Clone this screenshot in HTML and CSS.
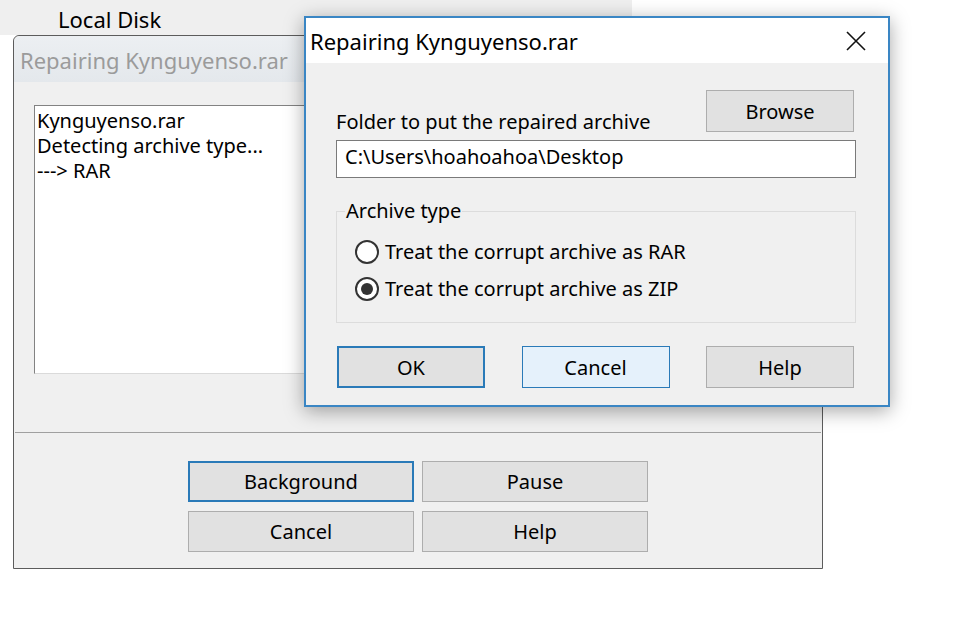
FILE: index.html
```html
<!DOCTYPE html>
<html lang="en">
<head>
    <meta charset="UTF-8">
    <title>Repairing Kynguyenso.rar</title>
    <link rel="stylesheet" href="styles.css">
</head>
<body>
<div class="desktop">

    <!-- Explorer behind -->
    <div class="explorer-strip">Local Disk</div>

    <!-- Progress window (inactive) -->
    <div class="window back-window">
        <div class="titlebar inactive">Repairing Kynguyenso.rar</div>
        <div class="window-body">
            <div class="log-box">
                <p>Kynguyenso.rar</p>
                <p>Detecting archive type...</p>
                <p>---&gt; RAR</p>
            </div>
            <div class="separator"></div>
            <div class="back-buttons">
                <button class="btn focused">Background</button>
                <button class="btn">Pause</button>
                <button class="btn">Cancel</button>
                <button class="btn">Help</button>
            </div>
        </div>
    </div>

    <!-- Repair options dialog (active) -->
    <div class="window front-window">
        <div class="titlebar active">
            <span>Repairing Kynguyenso.rar</span>
            <svg class="close-icon" width="20" height="20" viewBox="0 0 20 20">
                <path d="M1 1 L19 19 M19 1 L1 19" stroke="#111" stroke-width="1.6" fill="none"/>
            </svg>
        </div>
        <div class="window-body front-body">
            <div class="folder-row">
                <span class="folder-label">Folder to put the repaired archive</span>
                <button class="btn btn-small">Browse</button>
            </div>
            <div class="path-input">C:\Users\hoahoahoa\Desktop</div>

            <fieldset class="group-box">
                <legend>Archive type</legend>
                <div class="radio-row">
                    <span class="radio"></span>
                    <span>Treat the corrupt archive as RAR</span>
                </div>
                <div class="radio-row">
                    <span class="radio checked"></span>
                    <span>Treat the corrupt archive as ZIP</span>
                </div>
            </fieldset>

            <div class="dialog-buttons">
                <button class="btn btn-small focused">OK</button>
                <button class="btn btn-small hovered">Cancel</button>
                <button class="btn btn-small">Help</button>
            </div>
        </div>
    </div>

</div>
</body>
</html>
```

FILE: styles.css
```css
/* General */
body {
    margin: 0;
    background: #fff;
    font-family: "Noto Sans", "Open Sans", sans-serif;
    font-size: 20px;
    color: #000;
}

.desktop {
    position: relative;
    width: 972px;
    height: 630px;
    overflow: hidden;
}

/* Explorer strip at the top */
.explorer-strip {
    width: 632px;
    height: 35px;
    background: #efefef;
    padding-left: 58px;
    box-sizing: border-box;
    font-size: 22px;
    line-height: 39px;
}

/* Windows */
.window {
    position: absolute;
    box-sizing: border-box;
    background: #f0f0f0;
}

.titlebar {
    height: 46px;
    box-sizing: border-box;
    font-size: 22px;
    line-height: 48px;
}

.window-body {
    background: #f0f0f0;
}

/* Back progress window */
.back-window {
    left: 13px;
    top: 35px;
    width: 810px;
    height: 534px;
    border: 1px solid #5c5c5c;
    border-radius: 6px 6px 0 0;
}

.titlebar.inactive {
    padding-left: 6px;
    color: #9b9b9b;
    background: linear-gradient(#eceff2, #e4e8ec);
    border-radius: 6px 6px 0 0;
}

.log-box {
    margin: 23px 0 0 20px;
    width: 600px;
    height: 269px;
    box-sizing: border-box;
    background: #fff;
    border-top: 1px solid #828282;
    border-left: 1px solid #828282;
    border-bottom: 1px solid #dadada;
    padding: 2px 0 0 2px;
}

.log-box p {
    margin: 0;
    line-height: 25px;
}

.separator {
    margin: 58px 1px 0 1px;
    border-top: 1px solid #a0a0a0;
}

.back-buttons {
    display: grid;
    grid-template-columns: 226px 226px;
    grid-auto-rows: 41px;
    column-gap: 8px;
    row-gap: 9px;
    margin: 28px 0 0 174px;
}

/* Buttons */
.btn {
    font: inherit;
    background: #e1e1e1;
    border: 1px solid #adadad;
    padding: 0;
    color: #000;
}

.btn.focused {
    border: 2px solid #2a7ab8;
}

.btn.hovered {
    background: #e5f1fb;
    border: 1px solid #2a7ab8;
}

.btn-small {
    width: 148px;
    height: 42px;
}

/* Front dialog */
.front-window {
    left: 304px;
    top: 16px;
    width: 586px;
    height: 391px;
    border: 2px solid #3a86c4;
    box-shadow: 0 4px 18px rgba(0, 0, 0, 0.35);
}

.titlebar.active {
    display: flex;
    justify-content: space-between;
    align-items: center;
    background: #fff;
    padding: 0 22px 0 4px;
    height: 45px;
}

.front-body {
    padding: 27px 32px 0 30px;
}

.folder-row {
    display: flex;
    justify-content: space-between;
    align-items: flex-end;
}

.folder-label {
    line-height: 24px;
    margin-bottom: -2px;
}

.folder-row .btn {
    margin-right: 2px;
}

.path-input {
    margin-top: 8px;
    height: 38px;
    box-sizing: border-box;
    background: #fff;
    border: 1px solid #7a7a7a;
    padding-left: 8px;
    line-height: 32px;
}

/* Group box */
.group-box {
    margin: 21px 0 0 0;
    padding: 10px 0 0 18px;
    height: 124px;
    box-sizing: border-box;
    border: 1px solid #dcdcdc;
}

.group-box legend {
    padding: 0 1px;
    margin-left: -10px;
    line-height: 24px;
}

.radio-row {
    display: flex;
    align-items: center;
    gap: 6px;
    height: 37px;
}

.radio {
    width: 24px;
    height: 24px;
    box-sizing: border-box;
    border: 2px solid #333;
    border-radius: 50%;
    background: #fff;
    display: flex;
    align-items: center;
    justify-content: center;
}

.radio.checked::after {
    content: "";
    width: 12px;
    height: 12px;
    border-radius: 50%;
    background: #333;
}

.dialog-buttons {
    display: flex;
    justify-content: space-between;
    margin: 23px 2px 0 1px;
}
```
